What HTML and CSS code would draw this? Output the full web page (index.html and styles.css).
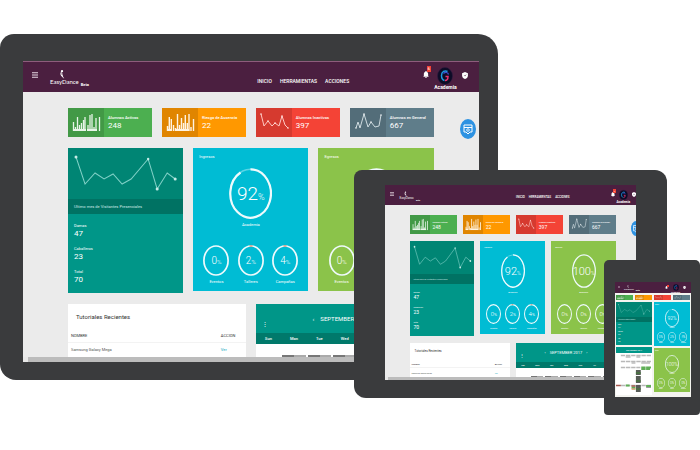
FILE: index.html
```
<!DOCTYPE html>
<html lang="es">
<head>
<meta charset="utf-8">
<title>EasyDance</title>
<link rel="stylesheet" href="styles.css">
</head>
<body>
<svg class="defs" aria-hidden="true">
  <symbol id="menu" viewBox="0 0 12 12"><path d="M0 1.5h12M0 6h12M0 10.5h12" stroke="#e6d9e3" stroke-width="2"/></symbol>
  <symbol id="dancer" viewBox="0 0 12 20"><circle cx="6" cy="2.5" r="2.5" fill="#fff"/><path d="M3.5 3C2 8 5 10 8 14l3 5.500C8 17 6 15 4 13 2 10 2 6 3.500 3z" fill="#fff"/><path d="M5 5c0 4 2 6 2 9" stroke="#fff" stroke-width="2" fill="none"/></symbol>
  <symbol id="bell" viewBox="0 0 10 13"><path d="M5 0c1 0 1.200 1 1.200 1.300C8.500 2 9 4 9 6v3l1 1.500H0L1 9V6c0-2 .5-4 2.800-4.700C3.800 1 4 0 5 0zM3.500 11.300h3C6.500 13.500 3.500 13.500 3.500 11.300z" fill="#fff"/></symbol>
  <symbol id="shield" viewBox="0 0 10 12"><path d="M5 0l5 2v4c0 3-2 5-5 6-3-1-5-3-5-6V2z" fill="#fff"/><path d="M3.500 5.500l1.500 1.500L7 4.500" fill="none" stroke="#4b1f40" stroke-width="1"/></symbol>
  <symbol id="avatar" viewBox="0 0 32 36"><ellipse cx="16" cy="18" rx="15" ry="17" fill="#0c0c26" stroke="#311a42"/><path d="M21 9C16 6 9 9 9 17c0 6 3 9 6 10" fill="none" stroke="#1d9ae0" stroke-width="3"/><path d="M13 13c4-4 9-2 10 2" fill="none" stroke="#3f4fd0" stroke-width="2.500"/><path d="M17 19h5c0 5-2 8-6 8" fill="none" stroke="#e8326c" stroke-width="3"/></symbol>
  <symbol id="bars-a" viewBox="0 0 36 29" preserveAspectRatio="none"><path d="M5.500 23v-9M7.500 23v-4M9.500 23V9M11.500 23v-6M13.500 23v-8M15.500 23V12M17 23V9M20 23v-6M22 23V7M24 23V6M26 23v-4M28 23V10M31.500 23V9" stroke="#e8f5e9" stroke-width="1.300"/><path d="M5 22h13M19 22h10" stroke="#e8f5e9" stroke-width="2"/></symbol>
  <symbol id="bars-b" viewBox="0 0 36 29" preserveAspectRatio="none"><path d="M5.500 23v-5M7.300 23V9M9.300 23V11M11.500 23v-6M13.500 23v-3M15.500 23V6M17.500 23v-6M19.500 23V10M21.500 23v-8M23.300 23V7M25.300 23v-8M27 23V6M29 23v-4M31.500 23V11" stroke="#fff3e0" stroke-width="1.400"/><path d="M5 22h4M14 22h13" stroke="#fff3e0" stroke-width="2"/></symbol>
  <symbol id="line-a" viewBox="0 0 36 29" preserveAspectRatio="none"><path d="M5 6l3 12 4-5 4 5 3-3 4 3 3-10 3 9 3 3" fill="none" stroke="#ffc9c3" stroke-width="1"/><g fill="#ffe5e2"><circle cx="5" cy="6" r=".8"/><circle cx="12" cy="13" r=".8"/><circle cx="19" cy="15" r=".8"/><circle cx="26" cy="8" r=".8"/><circle cx="32" cy="20" r=".8"/></g></symbol>
  <symbol id="line-b" viewBox="0 0 36 29" preserveAspectRatio="none"><path d="M6 20l2-6 2 6 4-14 4 13 3-5 4 5 4-1 2-11" fill="none" stroke="#cfdbe0" stroke-width="1"/><g fill="#eceff1"><circle cx="6" cy="20" r=".8"/><circle cx="14" cy="6" r=".8"/><circle cx="21" cy="14" r=".8"/><circle cx="31" cy="7" r=".8"/></g></symbol>
  <symbol id="trend" viewBox="0 0 115 51" preserveAspectRatio="none"><path d="M8 9l9 27 10-11 9 6 9-5 9 10 9-5 17-20 9 30 10-16 8 6" fill="none" stroke="#7fd0c6" stroke-width="1"/><g fill="#c5ebe6"><circle cx="8" cy="9" r="1.500"/><circle cx="80" cy="11" r="1.200"/><circle cx="89" cy="41" r="1.500"/><circle cx="107" cy="31" r="1.500"/></g></symbol>
  <symbol id="ring" viewBox="0 0 43 51" preserveAspectRatio="none"><ellipse cx="21.500" cy="25.500" rx="20.300" ry="24.200" fill="none" stroke="#effafc" stroke-width="2.200"/></symbol>
  <symbol id="ring-92" viewBox="0 0 43 51" preserveAspectRatio="none"><ellipse cx="21.500" cy="25.500" rx="20.300" ry="24.200" fill="none" stroke="#59d5e5" stroke-width="1.500"/><path d="M21.500 1.300A20.300 24.200 0 1 1 11.500 4.500" fill="none" stroke="#effafc" stroke-width="2.200"/></symbol>
  <symbol id="mini" viewBox="0 0 26 31" preserveAspectRatio="none"><ellipse cx="13" cy="15.500" rx="12.100" ry="14.500" fill="none" stroke="#effafc" stroke-width="1.700"/></symbol>
  <symbol id="mini-part" viewBox="0 0 26 31" preserveAspectRatio="none"><ellipse cx="13" cy="15.500" rx="12.100" ry="14.500" fill="none" stroke="#effafc" stroke-width="1.700"/><path d="M11.500 1h3" stroke="#d9a08c" stroke-width="1.700"/></symbol>
  <symbol id="help" viewBox="0 0 16 20" preserveAspectRatio="none"><path d="M4 6h8v7H10l-2 2-2-2H4zM4 8.500h8" fill="none" stroke="#fff" stroke-width="1"/><circle cx="8" cy="11" r="1.300" fill="none" stroke="#fff" stroke-width=".8"/></symbol>
</svg>

<main class="showcase">

  <section class="device desktop" aria-label="Escritorio">
    <div class="screen">
      <header class="bar">
        <button class="icon-btn menu" aria-label="Menú"><svg><use href="#menu"/></svg></button>
        <a class="logo" href="#"><svg><use href="#dancer"/></svg><span>EasyDance</span></a>
        <small class="beta">Beta</small>
        <nav class="nav"><a href="#">INICIO</a><a href="#">HERRAMIENTAS</a><a href="#">ACCIONES</a></nav>
        <button class="icon-btn bell" aria-label="Avisos"><svg><use href="#bell"/></svg><span class="badge">6</span></button>
        <a class="user" href="#"><svg><use href="#avatar"/></svg><span>Academia</span></a>
        <button class="icon-btn shield" aria-label="Seguridad"><svg><use href="#shield"/></svg></button>
      </header>
      <div class="content">
        <div class="tiles">
          <article class="tile green"><svg><use href="#bars-a"/></svg><div><h3>Alumnos Activos</h3><p>248</p></div></article>
          <article class="tile orange"><svg><use href="#bars-b"/></svg><div><h3>Riesgo de Ausencia</h3><p>22</p></div></article>
          <article class="tile red"><svg><use href="#line-a"/></svg><div><h3>Alumnos Inactivos</h3><p>397</p></div></article>
          <article class="tile slate"><svg><use href="#line-b"/></svg><div><h3>Alumnos en General</h3><p>667</p></div></article>
        </div>
        <div class="cards">
          <article class="visits">
            <svg class="trend"><use href="#trend"/></svg>
            <h3>Ultimo mes de Visitantes Presenciales</h3>
            <dl><div><dt>Damas</dt><dd>47</dd></div><div><dt>Caballeros</dt><dd>23</dd></div><div><dt>Total</dt><dd>70</dd></div></dl>
          </article>
          <article class="gauge cyan">
            <h3>Ingresos</h3>
            <div class="dial"><svg><use href="#ring-92"/></svg><b>92<i>%</i></b></div><p>Academia</p>
            <div class="minis">
              <div><div class="dial"><svg><use href="#mini"/></svg><b>0<i>%</i></b></div><p>Eventos</p></div>
              <div><div class="dial"><svg><use href="#mini-part"/></svg><b>2<i>%</i></b></div><p>Talleres</p></div>
              <div><div class="dial"><svg><use href="#mini-part"/></svg><b>4<i>%</i></b></div><p>Campañas</p></div>
            </div>
          </article>
          <article class="gauge lime">
            <h3>Egresos</h3>
            <div class="dial"><svg><use href="#ring"/></svg><b>100<i>%</i></b></div><p>Academia</p>
            <div class="minis">
              <div><div class="dial"><svg><use href="#mini"/></svg><b>0<i>%</i></b></div><p>Eventos</p></div>
              <div><div class="dial"><svg><use href="#mini"/></svg><b>0<i>%</i></b></div><p>Talleres</p></div>
              <div><div class="dial"><svg><use href="#mini"/></svg><b>0<i>%</i></b></div><p>Campañas</p></div>
            </div>
          </article>
        </div>
        <div class="lower">
          <article class="tutorials">
            <h2>Tutoriales Recientes</h2>
            <table><thead><tr><th>NOMBRE</th><th>ACCION</th></tr></thead><tbody><tr><td>Samsung Galaxy Mega</td><td><a href="#">Ver</a></td></tr></tbody></table>
          </article>
          <article class="calendar">
            <div class="month"><button class="more" aria-label="Opciones">⋮</button><button aria-label="Mes anterior">‹</button><h2>SEPTEMBER 2017</h2><button aria-label="Mes siguiente">›</button></div>
            <table><thead><tr><th>Sun</th><th>Mon</th><th>Tue</th><th>Wed</th><th>Thu</th><th>Fri</th><th>Sat</th></tr></thead>
            <tbody><tr><td></td><td class="event"></td><td class="event"></td><td class="event"></td><td class="event"></td><td class="event"></td><td class="event"></td></tr></tbody></table>
          </article>
        </div>
        <button class="help" aria-label="Ayuda"><svg><use href="#help"/></svg></button>
      </div>
      <div class="scroll"></div>
    </div>
  </section>

  <section class="device tablet" aria-label="Tableta">
    <div class="screen">
      <header class="bar">
        <button class="icon-btn menu" aria-label="Menú"><svg><use href="#menu"/></svg></button>
        <a class="logo" href="#"><svg><use href="#dancer"/></svg><span>EasyDance</span></a>
        <small class="beta">Beta</small>
        <nav class="nav"><a href="#">INICIO</a><a href="#">HERRAMIENTAS</a><a href="#">ACCIONES</a></nav>
        <button class="icon-btn bell" aria-label="Avisos"><svg><use href="#bell"/></svg><span class="badge">6</span></button>
        <a class="user" href="#"><svg><use href="#avatar"/></svg><span>Academia</span></a>
        <button class="icon-btn shield" aria-label="Seguridad"><svg><use href="#shield"/></svg></button>
      </header>
      <div class="content">
        <div class="tiles">
          <article class="tile green"><svg><use href="#bars-a"/></svg><div><h3>Alumnos Activos</h3><p>248</p></div></article>
          <article class="tile orange"><svg><use href="#bars-b"/></svg><div><h3>Riesgo de Ausencia</h3><p>22</p></div></article>
          <article class="tile red"><svg><use href="#line-a"/></svg><div><h3>Alumnos Inactivos</h3><p>397</p></div></article>
          <article class="tile slate"><svg><use href="#line-b"/></svg><div><h3>Alumnos en General</h3><p>667</p></div></article>
        </div>
        <div class="cards">
          <article class="visits">
            <svg class="trend"><use href="#trend"/></svg>
            <h3>Ultimo mes de Visitantes Presenciales</h3>
            <dl><div><dt>Damas</dt><dd>47</dd></div><div><dt>Caballeros</dt><dd>23</dd></div><div><dt>Total</dt><dd>70</dd></div></dl>
          </article>
          <article class="gauge cyan">
            <h3>Ingresos</h3>
            <div class="dial"><svg><use href="#ring-92"/></svg><b>92<i>%</i></b></div><p>Academia</p>
            <div class="minis">
              <div><div class="dial"><svg><use href="#mini"/></svg><b>0<i>%</i></b></div><p>Eventos</p></div>
              <div><div class="dial"><svg><use href="#mini-part"/></svg><b>2<i>%</i></b></div><p>Talleres</p></div>
              <div><div class="dial"><svg><use href="#mini-part"/></svg><b>4<i>%</i></b></div><p>Campañas</p></div>
            </div>
          </article>
          <article class="gauge lime">
            <h3>Egresos</h3>
            <div class="dial"><svg><use href="#ring"/></svg><b>100<i>%</i></b></div><p>Academia</p>
            <div class="minis">
              <div><div class="dial"><svg><use href="#mini"/></svg><b>0<i>%</i></b></div><p>Eventos</p></div>
              <div><div class="dial"><svg><use href="#mini"/></svg><b>0<i>%</i></b></div><p>Talleres</p></div>
              <div><div class="dial"><svg><use href="#mini"/></svg><b>0<i>%</i></b></div><p>Campañas</p></div>
            </div>
          </article>
        </div>
        <div class="lower">
          <article class="tutorials">
            <h2>Tutoriales Recientes</h2>
            <table><thead><tr><th>NOMBRE</th><th>ACCION</th></tr></thead><tbody><tr><td>Samsung Galaxy Mega</td><td><a href="#">Ver</a></td></tr></tbody></table>
          </article>
          <article class="calendar">
            <div class="month"><button class="more" aria-label="Opciones">⋮</button><button aria-label="Mes anterior">‹</button><h2>SEPTEMBER 2017</h2><button aria-label="Mes siguiente">›</button></div>
            <table><thead><tr><th>Sun</th><th>Mon</th><th>Tue</th><th>Wed</th><th>Thu</th><th>Fri</th><th>Sat</th></tr></thead>
            <tbody><tr><td></td><td class="event"></td><td class="event"></td><td class="event"></td><td class="event"></td><td class="event"></td><td class="event"></td></tr></tbody></table>
          </article>
        </div>
        <button class="help" aria-label="Ayuda"><svg><use href="#help"/></svg></button>
      </div>
      <div class="scroll"></div>
    </div>
  </section>

  <section class="device phone" aria-label="Móvil">
    <div class="screen">
      <header class="bar">
        <button class="icon-btn menu" aria-label="Menú"><svg><use href="#menu"/></svg></button>
        <a class="logo" href="#"><svg><use href="#dancer"/></svg><span>EasyDance</span></a>
        <small class="beta">Beta</small>
        <button class="icon-btn bell" aria-label="Avisos"><svg><use href="#bell"/></svg><span class="badge"></span></button>
        <a class="user" href="#"><svg><use href="#avatar"/></svg><span>Academia</span></a>
        <button class="icon-btn shield" aria-label="Seguridad"><svg><use href="#shield"/></svg></button>
      </header>
      <div class="content">
        <div class="tiles">
          <article class="tile green"><svg><use href="#bars-a"/></svg></article>
          <article class="tile orange"><svg><use href="#bars-b"/></svg></article>
          <article class="tile red"><svg><use href="#line-a"/></svg></article>
          <article class="tile slate"><svg><use href="#line-b"/></svg></article>
        </div>
        <div class="columns">
          <div class="column">
            <article class="visits">
              <svg class="trend"><use href="#trend"/></svg>
              <h3>Ultimo mes de Visitantes Presenciales</h3>
              <dl><div><dt>Damas</dt><dd>47</dd></div><div><dt>Caballeros</dt><dd>23</dd></div><div><dt>Total</dt><dd>70</dd></div></dl>
            </article>
            <article class="calendar">
              <div class="month"><h2>SEPTEMBER 2017</h2></div>
              <svg class="agenda" viewBox="0 0 37 42" preserveAspectRatio="none">
                <path d="M5 2.500h31M5 8.500h31M5 14.500h20M5 32.500h31" stroke="#b8b8b8" stroke-width="1.500" stroke-dasharray="4.500 .8"/>
                <path d="M10 4h5M21 4h4M16 10h4M26 10h9M31 34.500h5" stroke="#9a9a9a" stroke-width="1"/>
                <path d="M26 14.500h4.500M31 14.500h5M26 16h4.500M31 16h4M10 32.500h4M16 34.500h4M31 33h5" stroke="#5fae57" stroke-width="2"/>
                <path d="M0 32.500h5M16 33h4" stroke="#a85a50" stroke-width="1.500"/>
                <path d="M20.500 17h5v5h-5zM20.500 23h5v7h-5zM20.500 32h5v7h-5z" fill="#575c57"/>
                <path d="M20.500 20h5M20.500 28h5M20.500 36h5" stroke="#48743f" stroke-width="1.500"/>
                <path d="M16 36h4" stroke="#c59b60" stroke-width="1.500"/>
              </svg>
            </article>
          </div>
          <div class="column">
            <article class="gauge cyan">
              <h3>Ingresos</h3>
              <div class="dial"><svg><use href="#ring-92"/></svg><b>92%</b></div><p>Academia</p>
              <div class="minis">
                <div><div class="dial"><svg><use href="#mini"/></svg><b>0%</b></div><p>Eventos</p></div>
                <div><div class="dial"><svg><use href="#mini"/></svg><b>2%</b></div><p>Talleres</p></div>
                <div><div class="dial"><svg><use href="#mini"/></svg><b>4%</b></div><p>Campañas</p></div>
              </div>
            </article>
            <article class="gauge lime">
              <h3>Egresos</h3>
              <div class="dial"><svg><use href="#ring"/></svg><b>100%</b></div><p>Academia</p>
              <div class="minis">
                <div><div class="dial"><svg><use href="#mini"/></svg><b>0%</b></div><p>Eventos</p></div>
                <div><div class="dial"><svg><use href="#mini"/></svg><b>0%</b></div><p>Talleres</p></div>
                <div><div class="dial"><svg><use href="#mini"/></svg><b>0%</b></div><p>Campañas</p></div>
              </div>
            </article>
          </div>
        </div>
      </div>
    </div>
  </section>
</main>
</body>
</html>
```

FILE: styles.css
```
* { box-sizing: border-box; margin: 0; padding: 0; }
body { background: #fff; font-family: Roboto, "Liberation Sans", sans-serif; }
button { border: 0; background: none; color: inherit; font: inherit; cursor: pointer; }
a { color: inherit; text-decoration: none; }
h2, h3 { font-weight: 400; }
svg { display: block; }
.defs { position: absolute; width: 0; height: 0; }

/* Devices overlap on a free canvas */
.showcase { position: relative; min-height: 450px; overflow: hidden; }
.device { position: absolute; background: #3a3b3d; }

.desktop {
  left: 0; top: 34px; width: 71.1%;
  padding: 27px 19px 18px 23px;
  border-radius: 14px 20px 14px 16px;
  --bar: 31px; --bar-left: 9px; --bar-right: 11px;
  --menu: 6px; --logo-gap: 12px; --logo: 6px; --dancer-w: 6px; --dancer-h: 9px; --beta: 4px; --beta-gap: 2px; --beta-drop: 16px;
  --nav: 5px; --nav-gap: 8px; --nav-drop: 9px; --nav-after: 74px;
  --bell-w: 6px; --bell-h: 7px; --avatar-w: 16px; --avatar-h: 18px; --user: 5px; --user-gap: 5px; --user-drop: 2px;
  --top: 16px; --side-l: 45px; --side-r: 45px; --gap: 10px; --row-gap: 11px;
  --tile: 29px; --tile-icon: 36px; --tile-pad: 4px;
  --label: 4px; --label-line: 6px; --num: 8px; --num-line: 9px;
  --trend: 51px; --strip: 15px; --pad: 6px; --stat-pad: 9px; --stat-gap: 8px;
  --caption: 8px; --g-top: 5px; --g-title: 7px; --ring-w: 43px; --ring-h: 51px; --ring-text: 19px; --pct: 9px;
  --under: 2px; --g-mid: 16px; --mini-w: 26px; --mini-h: 31px; --mini-text: 10px; --mini-pct: 6px; --g-bottom: 5px;
  --title: 6px; --t-top: 9px; --t-line: 8px; --t-pad: 8px; --cell: 3px; --head: 14px; --row: 14px; --action: 25px;
  --month: 29px; --month-text: 6px; --week: 11px; --day: 13px; --event: 2px;
  --scroll: 5px;
}
.tablet {
  left: 50.5%; top: 170px; width: 44.8%;
  padding: 15px 31px 18px 31px;
  border-radius: 8px 12px 8px 12px;
  --bar: 20px; --bar-left: 5px; --bar-right: 0px;
  --menu: 4px; --logo-gap: 6px; --logo: 3px; --dancer-w: 3px; --dancer-h: 6px; --beta: 2px; --beta-gap: 2px; --beta-drop: 10px;
  --nav: 3px; --nav-gap: 4px; --nav-drop: 5px; --nav-after: 41px;
  --bell-w: 4px; --bell-h: 5px; --avatar-w: 9px; --avatar-h: 12px; --user: 3px; --user-gap: 2px; --user-drop: 2px;
  --top: 10px; --side-l: 25px; --side-r: 20px; --gap: 6px; --row-gap: 7px;
  --tile: 19px; --tile-icon: 20px; --tile-pad: 3px;
  --label: 2px; --label-line: 4px; --num: 5px; --num-line: 6px;
  --trend: 33px; --strip: 10px; --pad: 4px; --stat-pad: 6px; --stat-gap: 5px;
  --caption: 4px; --g-top: 4px; --g-title: 5px; --ring-w: 24px; --ring-h: 34px; --ring-text: 11px; --pct: 5px;
  --under: 2px; --g-mid: 10px; --mini-w: 15px; --mini-h: 20px; --mini-text: 6px; --mini-pct: 4px; --g-bottom: 4px;
  --title: 3px; --t-top: 6px; --t-line: 5px; --t-pad: 5px; --cell: 2px; --head: 9px; --row: 9px; --action: 15px;
  --month: 19px; --month-text: 4px; --week: 6px; --day: 9px; --event: 1px;
  --scroll: 3px;
}
.phone {
  right: 0; top: 260px; width: 13.7%;
  padding: 22px 9px 18px 11px;
  border-radius: 5px 5px 4px 4px;
  --bar: 11px; --bar-left: 3px; --bar-right: 5px;
  --menu: 2px; --logo-gap: 4px; --logo: 2px; --dancer-w: 2px; --dancer-h: 3px; --beta: 2px; --beta-gap: 2px; --beta-drop: 5px;
  --bell-w: 3px; --bell-h: 3px; --avatar-w: 6px; --avatar-h: 7px; --user: 2px; --user-gap: 3px; --user-drop: 1px;
  --top: 2px; --side-l: 1px; --side-r: 1px; --gap: 2px; --row-gap: 2px;
  --tile: 5px; --tile-icon: 9px; --tile-pad: 1px;
  --label: 1px; --label-line: 2px; --num: 2px; --num-line: 3px;
  --trend: 15px; --strip: 5px; --pad: 2px; --stat-pad: 2px; --stat-gap: 2px;
  --caption: 2px; --g-top: 2px; --g-title: 3px; --ring-w: 14px; --ring-h: 18px; --ring-text: 5px; --pct: 3px;
  --under: 0px; --g-mid: 3px; --mini-w: 8px; --mini-h: 10px; --mini-text: 3px; --mini-pct: 2px; --g-bottom: 2px;
  --month: 6px; --month-text: 2px;
}

.screen { display: flex; flex-direction: column; overflow: hidden; background: #ebebeb; }

.bar {
  display: flex; align-items: center; height: var(--bar);
  padding: 0 var(--bar-right) 0 var(--bar-left);
  background: #4b1f40; color: #fff;
}
.desktop .bar { border-top: 1px solid #8d5c7c; }
.icon-btn { position: relative; flex: none; }
.menu svg { width: var(--menu); height: var(--menu); }
.menu { padding-bottom: var(--label); }
.logo { margin-left: var(--logo-gap); font-family: Lato, sans-serif; font-size: var(--logo); line-height: 1; }
.logo svg { width: var(--dancer-w); height: var(--dancer-h); margin-left: 30%; }
.beta { margin-left: var(--beta-gap); padding-top: var(--beta-drop); font-size: var(--beta); font-weight: 700; line-height: 1; }
.nav { display: flex; gap: var(--nav-gap); margin: 0 var(--nav-after) 0 auto; padding-top: var(--nav-drop); font-size: var(--nav); line-height: 1; font-weight: 500; }
.bell svg { width: var(--bell-w); height: var(--bell-h); }
.desktop .bell { padding-bottom: 5px; }
.tablet .bell { padding-bottom: 1px; }
.phone .bell { margin-left: auto; }
.badge { position: absolute; left: 60%; padding: 0 1px; background: #f44336; font-size: var(--label); line-height: var(--label-line); }
.desktop .badge { top: -5px; }
.tablet .badge { top: -3px; }
.phone .badge { top: -1px; height: 2px; }
.user { display: flex; flex-direction: column; align-items: center; margin: var(--user-drop) var(--user-gap) 0; font-size: var(--user); font-weight: 700; line-height: 1; }
.user svg { width: var(--avatar-w); height: var(--avatar-h); }
.shield svg { width: var(--bell-w); height: var(--bell-h); }
.shield { padding-bottom: var(--label); }

.content { position: relative; display: grid; gap: var(--row-gap); padding: var(--top) var(--side-r) 0 var(--side-l); }
.tiles { display: grid; grid-template-columns: repeat(4, minmax(0, 1fr)); gap: var(--gap); }
.tile { display: flex; align-items: center; height: var(--tile); color: #fff; overflow: hidden; white-space: nowrap; }
.tile > svg { flex: none; width: var(--tile-icon); height: 100%; background: rgba(0, 0, 0, .12); }
.tile > div { padding-left: var(--tile-pad); }
.tile h3 { font-size: var(--label); line-height: var(--label-line); font-weight: 500; }
.tile p { font-size: var(--num); line-height: var(--num-line); font-weight: 400; }
.green { background: #4caf50; }
.orange { background: #ff9800; }
.red { background: #f44336; }
.slate { background: #5f7d8a; }

.cards { display: grid; grid-template-columns: repeat(3, minmax(0, 1fr)); align-items: start; gap: var(--gap); }
.visits { background: #009688; color: #fff; }
.trend { width: 100%; height: var(--trend); background: #008574; }
.visits h3 { height: var(--strip); padding: 0 var(--pad); background: #007263; color: #cde9e5; font-size: var(--label); line-height: var(--strip); white-space: nowrap; overflow: hidden; }
.visits dl { display: grid; gap: var(--stat-gap); padding: var(--stat-pad) var(--pad); }
.visits dt { font-size: var(--label); line-height: var(--label-line); }
.visits dd { font-size: var(--num); line-height: var(--num-line); }

.gauge { padding: var(--g-top) var(--pad) var(--g-bottom); color: #fff; text-align: center; }
.cyan { background: #00bcd4; }
.lime { background: #8bc34a; }
.gauge h3 { margin-bottom: var(--g-title); font-size: var(--label); line-height: var(--caption); text-align: left; }
.gauge p { margin-top: var(--under); font-size: var(--label); line-height: var(--caption); }
.dial { display: grid; place-items: center; }
.dial > * { grid-area: 1 / 1; }
.dial svg { width: var(--ring-w); height: var(--ring-h); }
.dial b { font-size: var(--ring-text); line-height: 1; font-weight: 300; }
.dial i { font-size: var(--pct); font-style: normal; }
.minis { display: grid; grid-template-columns: repeat(3, minmax(0, 1fr)); margin-top: var(--g-mid); }
.minis .dial svg { width: var(--mini-w); height: var(--mini-h); }
.minis .dial b { font-size: var(--mini-text); }
.minis .dial i { font-size: var(--mini-pct); }

.lower { display: grid; grid-template-columns: repeat(2, minmax(0, 1fr)); gap: var(--gap); }
table { width: 100%; border-collapse: collapse; table-layout: fixed; }
.tutorials { padding-top: var(--t-top); background: #fff; color: #333; }
.tutorials h2 { margin-bottom: var(--t-pad); padding: 0 var(--t-pad); font-size: var(--title); line-height: var(--t-line); }
.tutorials th, .tutorials td { padding: 0 var(--cell); font-size: var(--label); line-height: 1; text-align: left; font-weight: 400; }
.tutorials th { height: var(--head); box-shadow: inset 0 -1px #f3f3f3; }
.tutorials td { height: var(--row); color: #555; }
.tutorials th:last-child { width: calc(var(--action) + var(--cell)); }
.tutorials td a { color: #12a9c0; }

.calendar { background: #fff; overflow: hidden; }
.month { position: relative; display: flex; align-items: center; justify-content: center; gap: var(--pad); height: var(--month); background: #009688; color: #fff; font-size: var(--month-text); line-height: 1; white-space: nowrap; }
.month h2 { font-size: var(--month-text); }
.more { position: absolute; left: var(--pad); bottom: var(--pad); }
.calendar th { height: var(--week); background: #00796b; color: #fff; font-size: var(--label); line-height: 1; font-weight: 500; }
.calendar td { height: var(--day); vertical-align: bottom; }
.event::after { content: ""; display: block; height: var(--event); margin: 0 1px; background: linear-gradient(90deg, #777 50%, #aaa 50%); }

.help { position: absolute; top: 27px; right: 3px; width: 16px; height: 20px; border-radius: 50%; background: #2d92e2; }
.help svg { width: 100%; height: 100%; }
.tablet .help { top: 16px; right: -5px; width: 10px; height: 15px; }
.scroll { height: var(--scroll); border-left: var(--scroll) solid #e8e8e8; background: #bcbcbc; }

.phone .content { background: #f4f4f0; }
.columns { display: grid; grid-template-columns: repeat(2, minmax(0, 1fr)); gap: var(--gap); }
.column { display: flex; flex-direction: column; gap: var(--gap); }
.phone .gauge { padding-left: 1px; padding-right: 1px; }
.phone .lime { margin-bottom: 5px; }
.agenda { width: 100%; height: 42px; }
```
